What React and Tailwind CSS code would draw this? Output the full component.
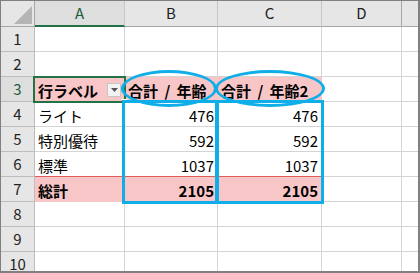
import React from 'react';

const font = { fontFamily: '"Noto Sans CJK JP", "Noto Sans", sans-serif' };

const data = {
    3: [
        { t: '行ラベル', bold: true, pink: true, filter: true },
        { t: '合計 / 年齢', bold: true, pink: true },
        { t: '合計 / 年齢2', bold: true, pink: true },
    ],
    4: [{ t: 'ライト' }, { t: '476', num: true }, { t: '476', num: true }],
    5: [{ t: '特別優待' }, { t: '592', num: true }, { t: '592', num: true }],
    6: [
        { t: '標準', red: true },
        { t: '1037', num: true, red: true },
        { t: '1037', num: true, red: true },
    ],
    7: [
        { t: '総計', bold: true, pink: true },
        { t: '2105', num: true, bold: true, pink: true },
        { t: '2105', num: true, bold: true, pink: true },
    ],
};

const Cell = ({ cell }) => {
    if (!cell) {
        return <div className="border-r border-b border-[#d4d4d4] bg-white" />;
    }
    return (
        <div
            className={[
                'relative flex items-center px-[3px] pt-[2px] text-[15px] leading-none text-black whitespace-pre overflow-hidden [word-spacing:3px]',
                cell.num ? 'justify-end' : 'justify-start',
                cell.bold ? 'font-bold' : 'font-normal',
                cell.pink ? 'bg-[#f8c6c6] border-r border-b border-transparent' : 'bg-white border-r border-b border-[#d4d4d4]',
                cell.red ? 'border-b-[#e25b5b]' : '',
            ].join(' ')}
        >
            {cell.t}
            {cell.filter && (
                <div className="absolute right-[3px] top-[6px] w-[14px] h-[14px] bg-[#f2f2f2] border border-[#c6c6c6] flex items-center justify-center">
                    <svg width="7" height="4" viewBox="0 0 7 4">
                        <path d="M0 0h7L3.5 4z" fill="#555" />
                    </svg>
                </div>
            )}
        </div>
    );
};

export default function App() {
    const rows = [1, 2, 3, 4, 5, 6, 7, 8, 9, 10];
    return (
        <div className="w-[420px] h-[273px] bg-white" style={font}>
            <div className="relative w-[420px] h-[273px] overflow-hidden border-t border-l border-r-2 border-b-2 border-[#808080]">
                <div className="grid grid-cols-[34px_90px_93px_104px_80px_16px] grid-rows-[26px_repeat(10,25px)]">
                    {/* header row */}
                    <div className="relative bg-[#e6e6e6] border-r border-b border-[#a6a6a6]">
                        <svg className="absolute right-[2px] bottom-[2px]" width="18" height="18" viewBox="0 0 18 18">
                            <path d="M18 0V18H0z" fill="#b5b5b5" />
                        </svg>
                    </div>
                    <div className="flex items-center justify-center bg-[#dedede] border-r border-[#c6c6c6] border-b-2 border-b-[#217346] text-[15px] text-[#1e5c38]">A</div>
                    <div className="flex items-center justify-center bg-[#e6e6e6] border-r border-b border-[#c6c6c6] border-b-[#a6a6a6] text-[15px] text-[#222]">B</div>
                    <div className="flex items-center justify-center bg-[#e6e6e6] border-r border-b border-[#c6c6c6] border-b-[#a6a6a6] text-[15px] text-[#222]">C</div>
                    <div className="flex items-center justify-center bg-[#e6e6e6] border-r border-b border-[#a6a6a6] text-[15px] text-[#222]">D</div>
                    <div className="bg-[#e6e6e6] border-b border-[#a6a6a6]" />

                    {rows.map((r) => {
                        const cells = data[r] || [];
                        return (
                            <React.Fragment key={r}>
                                <div
                                    className={
                                        r === 3
                                            ? 'flex items-start justify-center pt-[3px] leading-[18px] bg-[#dedede] border-r border-b border-[#bdbdbd] text-[15px] text-[#1e5c38]'
                                            : 'flex items-start justify-center pt-[3px] leading-[18px] bg-[#e6e6e6] border-r border-b border-[#bdbdbd] text-[15px] text-[#222]'
                                    }
                                >
                                    {r}
                                </div>
                                <Cell cell={cells[0]} />
                                <Cell cell={cells[1]} />
                                <Cell cell={cells[2]} />
                                <Cell />
                                <div className="border-b border-[#d4d4d4] bg-white" />
                            </React.Fragment>
                        );
                    })}
                </div>

                {/* selected cell A3 */}
                <div className="absolute left-[32px] top-[75px] w-[93px] h-[27px] border-2 border-[#217346] pointer-events-none" />
                <div className="absolute left-[121px] top-[98px] w-[5px] h-[5px] bg-[#217346] border border-white" />

                {/* blue highlight boxes */}
                <div className="absolute left-[121px] top-[99px] w-[97px] h-[104px] border-[3px] border-[#10aee8]" />
                <div className="absolute left-[214px] top-[99px] w-[109px] h-[104px] border-[3px] border-[#10aee8]" />

                {/* blue ellipses */}
                <div className="absolute left-[120px] top-[69px] w-[96px] h-[37px] rounded-[50%] border-[3px] border-[#10aee8]" />
                <div className="absolute left-[214px] top-[69px] w-[110px] h-[37px] rounded-[50%] border-[3px] border-[#10aee8]" />
            </div>
        </div>
    );
}
